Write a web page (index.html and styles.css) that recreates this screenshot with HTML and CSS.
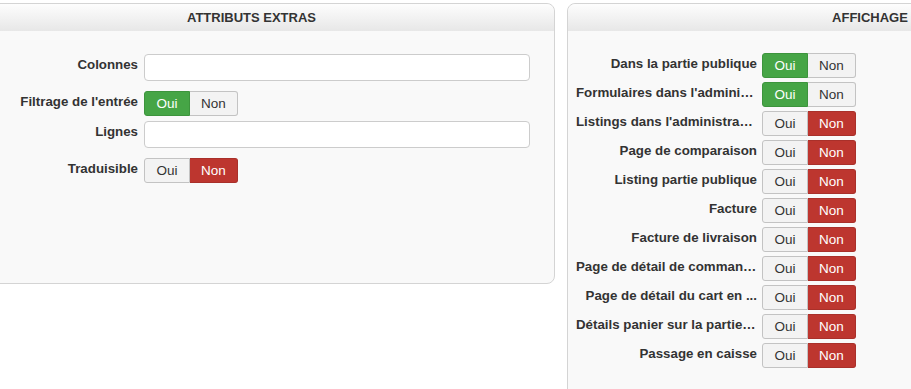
FILE: index.html
```
<!DOCTYPE html>
<html lang="fr">
<head>
  <meta charset="UTF-8"/>
  <title>Attributs extras</title>
  <link rel="stylesheet" href="styles.css">
</head>
<body>
<div class="panels">
  <div class="panel panel-left">
    <div class="panel-head">Attributs extras</div>
    <div class="panel-body">
      <div class="row row-input">
        <label>Colonnes</label>
        <input type="text" class="field">
      </div>
      <div class="row row-toggle">
        <label>Filtrage de l'entrée</label>
        <div class="toggle"><span class="yes on">Oui</span><span class="no">Non</span></div>
      </div>
      <div class="row row-input">
        <label>Lignes</label>
        <input type="text" class="field">
      </div>
      <div class="row row-toggle">
        <label>Traduisible</label>
        <div class="toggle"><span class="yes">Oui</span><span class="no on">Non</span></div>
      </div>
    </div>
  </div>

  <div class="panel panel-right">
    <div class="panel-head">Affichage</div>
    <div class="panel-body" id="display"></div>
  </div>
</div>

<script>
  const options = [
    ["Dans la partie publique", true],
    ["Formulaires dans l'administration", true],
    ["Listings dans l'administration", false],
    ["Page de comparaison", false],
    ["Listing partie publique", false],
    ["Facture", false],
    ["Facture de livraison", false],
    ["Page de détail de commande", false],
    ["Page de détail du cart en ...", false],
    ["Détails panier sur la partie publique", false],
    ["Passage en caisse", false]
  ];

  const box = document.getElementById("display");
  options.forEach(([name, yes]) => {
    const row = document.createElement("div");
    row.className = "row row-toggle";
    row.innerHTML =
      `<label title="${name}">${name}</label>` +
      `<div class="toggle"><span class="yes${yes ? " on" : ""}">Oui</span>` +
      `<span class="no${yes ? "" : " on"}">Non</span></div>`;
    box.appendChild(row);
  });
</script>
</body>
</html>
```

FILE: styles.css
```
body {
  margin: 0;
  background: #fff;
  font-family: "Liberation Sans", Arial, sans-serif;
  font-size: 13px;
  color: #333;
  overflow: hidden;
}

.panels {
  display: flex;
  gap: 12px;
  padding-top: 3px;
  margin-left: -52px;
  align-items: flex-start;
}

.panel {
  flex: none;
  background: #f9f9f9;
  border: 1px solid #d4d4d4;
  border-radius: 8px;
}

.panel-left {
  width: 605px;
  height: 279px;
}

.panel-right {
  width: 604px;
  height: 420px;
}

.panel-head {
  height: 27px;
  line-height: 28px;
  text-align: center;
  font-weight: bold;
  text-transform: uppercase;
  background: linear-gradient(#fdfdfd, #e7e7e7);
  border-radius: 8px 8px 0 0;
}

.panel-left .panel-body {
  padding: 23px 0 0 0;
}

.panel-right .panel-body {
  padding: 22px 0 0 8px;
}

.row {
  display: flex;
  align-items: flex-start;
}

.row label {
  flex: none;
  box-sizing: border-box;
  width: 189px;
  padding-top: 2px;
  margin-right: 6px;
  line-height: 18px;
  font-size: 13.3px;
  font-weight: bold;
  text-align: right;
  white-space: nowrap;
  overflow: hidden;
  text-overflow: ellipsis;
}

.panel-right .row label {
  width: 181px;
  margin-right: 5px;
}

.panel-left .row-input {
  margin-bottom: 10px;
}

.panel-left .row-toggle {
  margin-bottom: 5px;
}

.panel-right .row-toggle {
  margin-bottom: 4px;
}

.field {
  box-sizing: border-box;
  width: 386px;
  height: 27px;
  margin: 0;
  background: #fff;
  border: 1px solid #ccc;
  border-radius: 4px;
}

.toggle {
  display: flex;
  height: 25px;
}

.toggle span {
  box-sizing: border-box;
  height: 25px;
  line-height: 23px;
  font-size: 13.5px;
  text-align: center;
  background: #f3f3f3;
  border: 1px solid #c3c3c3;
  color: #333;
}

.toggle .yes {
  width: 46px;
  border-radius: 3px 0 0 3px;
}

.toggle .no {
  width: 48px;
  border-left: none;
  border-radius: 0 3px 3px 0;
}

.toggle .yes.on {
  background: #46a546;
  border-color: #3d943d;
  color: #fff;
}

.toggle .no.on {
  background: #bd362f;
  border-color: #a9302a;
  color: #fff;
}
```
